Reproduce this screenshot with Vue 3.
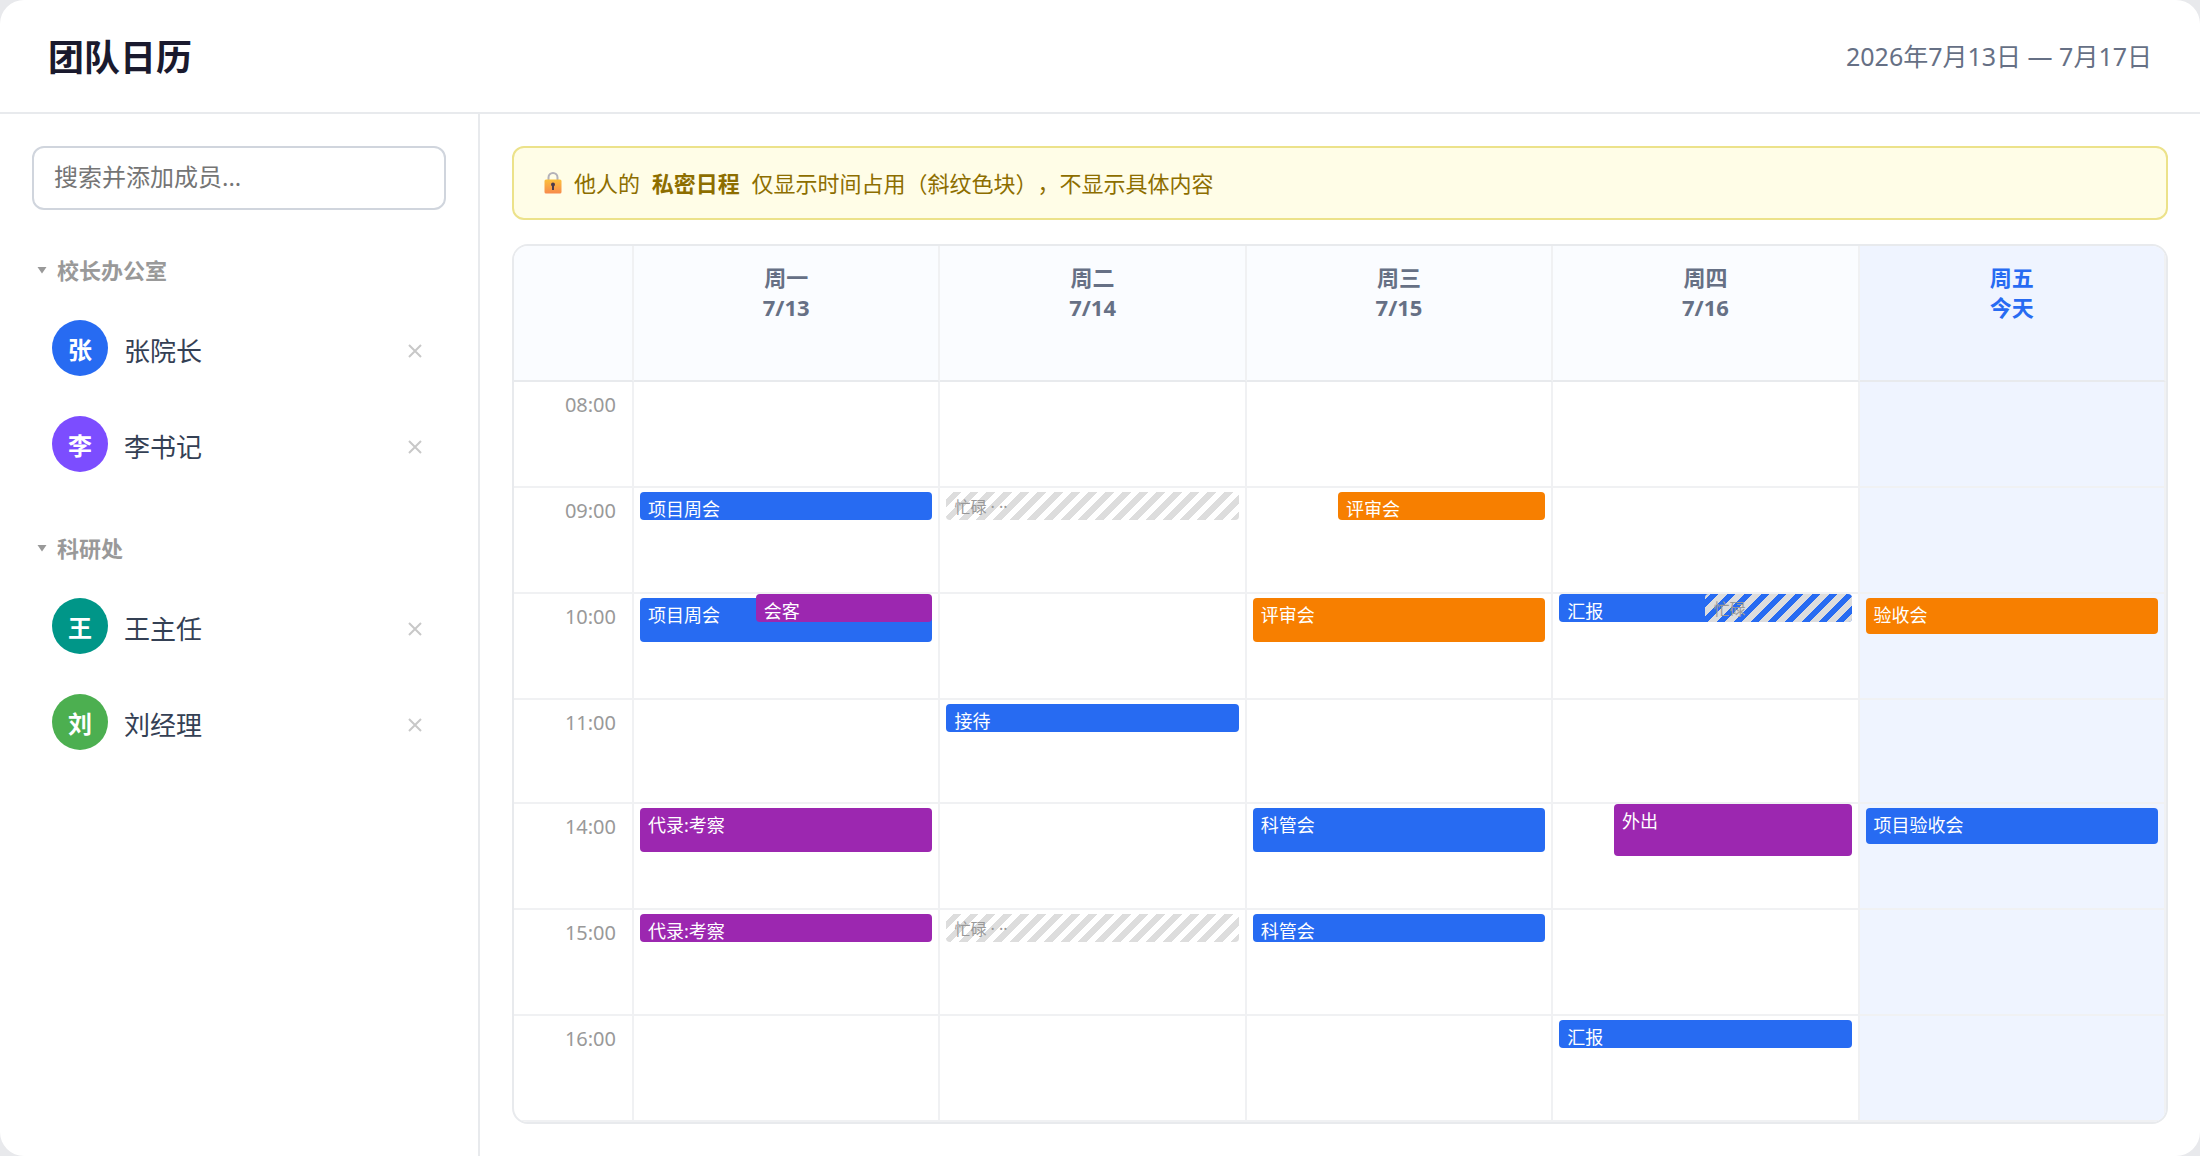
<template>
  <div class="team-calendar">
    <!-- Header -->
    <header class="tc-header">
      <h1>团队日历</h1>
      <div class="tc-range">2026年7月13日 — 7月17日</div>
    </header>

    <div class="tc-body">
      <!-- Members -->
      <aside class="tc-sidebar">
        <input
          v-model="keyword"
          class="tc-search"
          type="text"
          placeholder="搜索并添加成员..."
          aria-label="搜索并添加成员"
        />
        <section v-for="group in groups" :key="group.name" class="tc-group">
          <button class="tc-group-head" @click="group.open = !group.open">
            <svg
              class="tc-arrow"
              :class="{ closed: !group.open }"
              viewBox="0 0 10 8"
              aria-hidden="true"
            >
              <path d="M0.5 1h9L5 7.5z" fill="currentColor" />
            </svg>
            {{ group.name }}
          </button>
          <ul v-if="group.open">
            <li v-for="m in group.members" :key="m.name">
              <span class="tc-avatar" :class="m.color">{{ m.name[0] }}</span>
              <span class="tc-name">{{ m.name }}</span>
              <button
                class="tc-remove"
                :aria-label="'移除' + m.name"
                @click="removeMember(group, m)"
              >
                <svg viewBox="0 0 14 14" aria-hidden="true">
                  <path d="M1 1l12 12M13 1L1 13" stroke="currentColor" stroke-width="2" />
                </svg>
              </button>
            </li>
          </ul>
        </section>
      </aside>

      <main class="tc-main">
        <!-- Privacy notice -->
        <div class="tc-notice">
          <svg class="tc-lock" viewBox="0 0 18 22" aria-hidden="true">
            <defs>
              <linearGradient id="lockBody" x1="0" y1="0" x2="0" y2="1">
                <stop offset="0" stop-color="#fcc03c" />
                <stop offset="1" stop-color="#f78a4c" />
              </linearGradient>
            </defs>
            <path
              d="M4.5 10V5.5a4.5 4.5 0 0 1 9 0V10"
              fill="none"
              stroke="#b4b2b8"
              stroke-width="2"
            />
            <rect x="0.5" y="7.5" width="17" height="14" rx="1.5" fill="url(#lockBody)" />
            <circle cx="9" cy="12.5" r="2" fill="#4b3b4b" />
            <path d="M8 13h2v5H8z" fill="#4b3b4b" />
          </svg>
          <p>他人的 <strong>私密日程</strong> 仅显示时间占用（斜纹色块），不显示具体内容</p>
        </div>

        <!-- Week grid -->
        <div class="tc-grid">
          <div class="tc-head"></div>
          <div
            v-for="day in days"
            :key="day.key"
            class="tc-head"
            :class="{ today: day.today }"
          >
            <div>{{ day.week }}</div>
            <div>{{ day.label }}</div>
          </div>

          <template v-for="hour in hours" :key="hour">
            <div class="tc-time">{{ hour }}</div>
            <div
              v-for="day in days"
              :key="day.key + hour"
              class="tc-cell"
              :class="{ today: day.today }"
            >
              <div
                v-for="(ev, i) in eventsAt(day.key, hour)"
                :key="i"
                class="tc-event"
                :class="ev.type"
                :style="eventStyle(ev)"
              >
                {{ ev.title }}
              </div>
            </div>
          </template>
        </div>
      </main>
    </div>
  </div>
</template>

<script setup>
import { ref, reactive } from 'vue'

const keyword = ref('')

const groups = reactive([
  {
    name: '校长办公室',
    open: true,
    members: [
      { name: '张院长', color: 'blue' },
      { name: '李书记', color: 'violet' }
    ]
  },
  {
    name: '科研处',
    open: true,
    members: [
      { name: '王主任', color: 'teal' },
      { name: '刘经理', color: 'green' }
    ]
  }
])

const days = [
  { key: 'mon', week: '周一', label: '7/13' },
  { key: 'tue', week: '周二', label: '7/14' },
  { key: 'wed', week: '周三', label: '7/15' },
  { key: 'thu', week: '周四', label: '7/16' },
  { key: 'fri', week: '周五', label: '今天', today: true }
]

const hours = ['08:00', '09:00', '10:00', '11:00', '14:00', '15:00', '16:00']

const events = [
  { day: 'mon', hour: '09:00', title: '项目周会', type: 'blue', height: 28 },
  { day: 'mon', hour: '10:00', title: '项目周会', type: 'blue', height: 44 },
  { day: 'mon', hour: '10:00', title: '会客', type: 'purple', height: 28, top: 0, left: 40 },
  { day: 'mon', hour: '14:00', title: '代录:考察', type: 'purple', height: 44 },
  { day: 'mon', hour: '15:00', title: '代录:考察', type: 'purple', height: 28 },
  { day: 'tue', hour: '09:00', title: '忙碌 · ··', type: 'busy', height: 28 },
  { day: 'tue', hour: '11:00', title: '接待', type: 'blue', height: 28 },
  { day: 'tue', hour: '15:00', title: '忙碌 · ··', type: 'busy', height: 28 },
  { day: 'wed', hour: '09:00', title: '评审会', type: 'orange', height: 28, left: 30 },
  { day: 'wed', hour: '10:00', title: '评审会', type: 'orange', height: 44 },
  { day: 'wed', hour: '14:00', title: '科管会', type: 'blue', height: 44 },
  { day: 'wed', hour: '15:00', title: '科管会', type: 'blue', height: 28 },
  { day: 'thu', hour: '10:00', title: '汇报', type: 'blue', height: 28, top: 0 },
  { day: 'thu', hour: '10:00', title: '忙碌', type: 'busy', height: 28, top: 0, left: 50 },
  { day: 'thu', hour: '14:00', title: '外出', type: 'purple', height: 52, top: 0, left: 20 },
  { day: 'thu', hour: '16:00', title: '汇报', type: 'blue', height: 28 },
  { day: 'fri', hour: '10:00', title: '验收会', type: 'orange', height: 36 },
  { day: 'fri', hour: '14:00', title: '项目验收会', type: 'blue', height: 36 }
]

function eventsAt(day, hour) {
  return events.filter(e => e.day === day && e.hour === hour)
}

function eventStyle(ev) {
  return {
    top: (ev.top ?? 4) + 'px',
    height: ev.height + 'px',
    left: ev.left ? ev.left + '%' : '6px'
  }
}

function removeMember(group, member) {
  group.members = group.members.filter(m => m !== member)
}
</script>

<style>
body {
  background: #e8e9ec;
}
</style>

<style scoped>
.team-calendar {
  display: flex;
  flex-direction: column;
  min-height: 100vh;
  background: #fff;
  border-radius: 24px;
  overflow: hidden;
  color: #1a1a2e;
  font-family: "Noto Sans", "Noto Sans CJK SC", sans-serif;
}
.team-calendar * {
  box-sizing: border-box;
}
button {
  padding: 0;
  border: none;
  background: none;
  font-family: inherit;
  cursor: pointer;
}
/* Header */
.tc-header {
  display: flex;
  align-items: center;
  justify-content: space-between;
  padding: 32px 48px;
  border-bottom: 2px solid #e8eaed;
}
.tc-header h1 {
  margin: 0;
  padding-top: 4px;
  font-size: 36px;
  line-height: 44px;
}
.tc-range {
  color: #667085;
  font-size: 25px;
  line-height: 36px;
}
.tc-body {
  flex: 1;
  display: flex;
}
/* Sidebar */
.tc-sidebar {
  width: 480px;
  flex-shrink: 0;
  padding: 32px;
  border-right: 2px solid #e8eaed;
}
.tc-search {
  width: 100%;
  height: 64px;
  padding: 0 20px 4px;
  border: 2px solid #d0d5dd;
  border-radius: 12px;
  font-family: inherit;
  font-size: 24px;
  outline: none;
}
.tc-search::placeholder {
  color: #757575;
}
.tc-group {
  margin-top: 44px;
}
.tc-group + .tc-group {
  margin-top: 40px;
}
.tc-group-head {
  display: flex;
  align-items: center;
  gap: 10px;
  padding-left: 5px;
  color: #999;
  font-size: 22px;
  font-weight: 700;
  line-height: 32px;
}
.tc-arrow {
  width: 10px;
  height: 8px;
}
.tc-arrow.closed {
  transform: rotate(-90deg);
}
.tc-group ul {
  margin: 14px 0 0;
  padding: 0;
  list-style: none;
}
.tc-group li {
  display: flex;
  align-items: center;
  height: 96px;
  padding: 0 24px 0 20px;
}
.tc-avatar {
  display: flex;
  align-items: center;
  justify-content: center;
  width: 56px;
  height: 56px;
  border-radius: 50%;
  color: #fff;
  font-size: 24px;
  font-weight: 700;
}
.tc-avatar.blue { background: #276bf2; }
.tc-avatar.violet { background: #7c4dff; }
.tc-avatar.teal { background: #009688; }
.tc-avatar.green { background: #4caf50; }
.tc-name {
  flex: 1;
  padding-top: 4px;
  margin-left: 16px;
  color: #344054;
  font-size: 26px;
}
.tc-remove {
  width: 14px;
  padding-top: 6px;
  color: #c8c8c8;
}
.tc-remove svg {
  display: block;
  width: 14px;
  height: 14px;
}
/* Main */
.tc-main {
  flex: 1;
  min-width: 0;
  display: flex;
  flex-direction: column;
  gap: 24px;
  padding: 32px;
}
.tc-notice {
  display: flex;
  align-items: center;
  gap: 12px;
  padding: 18px 30px;
  border: 2px solid #ece28a;
  border-radius: 12px;
  background: #fffde7;
  color: #8d6e00;
  font-size: 22px;
  line-height: 34px;
  text-spacing-trim: space-all;
}
.tc-notice p {
  margin: 0;
}
.tc-notice strong {
  margin: 0 6px;
}
.tc-lock {
  width: 18px;
  height: 22px;
}
/* Week grid */
.tc-grid {
  flex: 1;
  display: grid;
  grid-template-columns: 120px repeat(5, minmax(0, 1fr));
  /* the row before the lunch break is a touch shorter */
  grid-template-rows: 136px repeat(3, minmax(96px, 106fr)) minmax(96px, 104fr) repeat(3, minmax(96px, 106fr));
  border: 2px solid #e8eaed;
  border-radius: 16px;
  overflow: hidden;
}
.tc-head {
  padding-top: 16px;
  border-right: 2px solid #f0f1f3;
  border-bottom: 2px solid #e8eaed;
  background: #fafcff;
  color: #667085;
  font-size: 22px;
  font-weight: 700;
  line-height: 30px;
  text-align: center;
}
.tc-head.today {
  background: #eff4ff;
  color: #276bf2;
}
.tc-time {
  padding: 8px 16px 0 0;
  border-right: 2px solid #f0f1f3;
  border-bottom: 2px solid #f0f1f3;
  color: #999;
  font-size: 20px;
  line-height: 30px;
  text-align: right;
}
.tc-cell {
  position: relative;
  border-right: 2px solid #f0f1f3;
  border-bottom: 2px solid #f0f1f3;
}
.tc-cell.today {
  background: #eff4ff;
}
/* Events */
.tc-event {
  position: absolute;
  right: 6px;
  padding: 4px 8px;
  border-radius: 4px;
  overflow: hidden;
  color: #fff;
  font-size: 18px;
  line-height: 26px;
  white-space: nowrap;
}
.tc-event.blue { background: #276bf2; }
.tc-event.purple { background: #9c27b0; }
.tc-event.orange { background: #f77f00; }
.tc-event.busy {
  background: repeating-linear-gradient(
    -45deg,
    #ddd,
    #ddd 6px,
    transparent 6px,
    transparent 12px
  );
  color: #999;
  font-size: 16px;
  line-height: 22px;
}
</style>
